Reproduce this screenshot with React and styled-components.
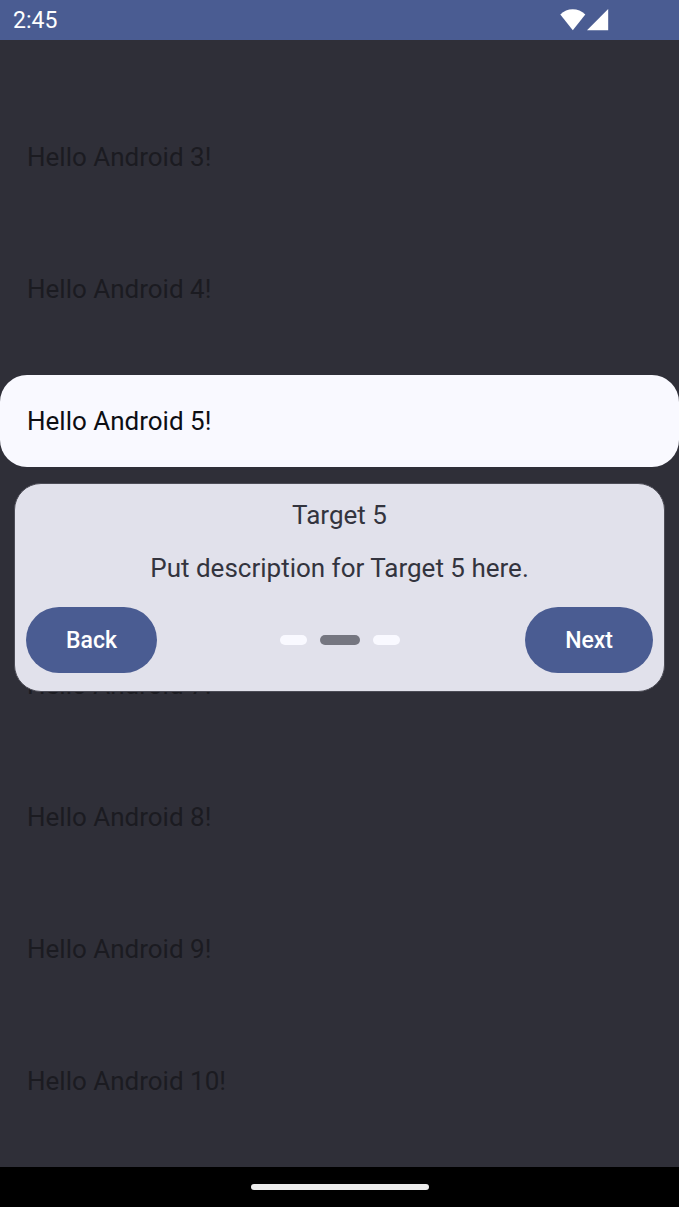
import React, { useState } from 'react';
import styled, { createGlobalStyle } from 'styled-components';

const FIRST_ROW = 3;
const ROW_COUNT = 8;
const rows = Array.from({ length: ROW_COUNT }, (_, i) => FIRST_ROW + i);
const steps = [4, 5, 6];

const App = () => {
  const [target, setTarget] = useState(5);

  const goBack = () => setTarget(Math.max(steps[0], target - 1));
  const goNext = () => setTarget(Math.min(steps[steps.length - 1], target + 1));

  return (
    <>
      <GlobalStyle />
      <Screen>
        <StatusBar>
          <Clock>2:45</Clock>
          <StatusIcons>
            <svg width="26" height="22" viewBox="0 0 26 22" aria-hidden="true">
              <path d="M0.3 5.5C7-1.4 18.4-1.4 25.3 5.5L12.8 21.2Z" fill="#fff" />
            </svg>
            <svg width="22" height="22" viewBox="0 0 22 22" aria-hidden="true">
              <path d="M21.2 0V21.2H0Z" fill="#fff" />
            </svg>
          </StatusIcons>
        </StatusBar>
        <List>
          {rows.map(row => (
            <Row
              key={row}
              $active={row === target}
              $covered={row === target + 1}
            >
              Hello Android {row}!
              {row === target && (
                <Tooltip role="dialog" aria-label={`Target ${row}`}>
                  <TooltipText>Target {row}</TooltipText>
                  <TooltipText>
                    Put description for Target {row} here.
                  </TooltipText>
                  <TooltipFooter>
                    <PillButton type="button" onClick={goBack}>
                      Back
                    </PillButton>
                    <Steps>
                      {steps.map(step => (
                        <Step key={step} $current={step === target} />
                      ))}
                    </Steps>
                    <PillButton type="button" $end onClick={goNext}>
                      Next
                    </PillButton>
                  </TooltipFooter>
                </Tooltip>
              )}
            </Row>
          ))}
        </List>
        <NavigationBar>
          <HomeHandle />
        </NavigationBar>
      </Screen>
    </>
  );
};

const GlobalStyle = createGlobalStyle`
  * {
    box-sizing: border-box;
  }

  body {
    margin: 0;
    background-color: #2f2f38;
    font-family: Roboto, 'Liberation Sans', sans-serif;
  }
`;

const Screen = styled.div`
  display: flex;
  flex-direction: column;
  min-height: 100vh;
`;

const StatusBar = styled.header`
  display: flex;
  align-items: center;
  justify-content: space-between;
  height: 40px;
  padding: 0 70px 0 13px;
  background-color: #4a5c92;
  color: #fff;
`;

const Clock = styled.time`
  padding-top: 2px;
  font-size: 23px;
  line-height: 40px;
`;

const StatusIcons = styled.div`
  display: flex;
  gap: 1px;
`;

const List = styled.ul`
  display: flex;
  flex: 1;
  flex-direction: column;
  gap: 40px;
  margin: 0;
  padding: 71px 0 40px;
  list-style: none;
`;

/* The row right under the tooltip is completely behind it. */
const Row = styled.li`
  position: relative;
  visibility: ${({ $covered }) => ($covered ? 'hidden' : 'visible')};
  padding: 26px 27px;
  border-radius: 27px;
  background-color: ${({ $active }) => ($active ? '#f9f9ff' : 'transparent')};
  color: ${({ $active }) => ($active ? '#0d0e13' : '#1b1b21')};
  font-size: 26px;
  line-height: 40px;
`;

const Tooltip = styled.section`
  position: absolute;
  top: calc(100% + 16px);
  right: 14px;
  left: 14px;
  z-index: 1;
  display: flex;
  flex-direction: column;
  gap: 13px;
  padding: 11px 11px 18px;
  border: 1px solid #4c4c56;
  border-radius: 27px;
  background-color: #e1e1eb;
  color: #33343e;
`;

const TooltipText = styled.p`
  margin: 0;
  text-align: center;
`;

const TooltipFooter = styled.div`
  display: grid;
  grid-template-columns: 1fr auto 1fr;
  align-items: center;
  padding-top: 6px;
`;

const PillButton = styled.button`
  justify-self: ${({ $end }) => ($end ? 'end' : 'start')};
  padding: 14px 40px 12px;
  border: 0;
  border-radius: 33px;
  background-color: #4a5c92;
  color: #fff;
  font-family: inherit;
  font-size: 23px;
  font-weight: 500;
  line-height: 40px;
  cursor: pointer;
`;

const Steps = styled.div`
  display: flex;
  gap: 13px;
`;

const Step = styled.span`
  width: ${({ $current }) => ($current ? '40px' : '27px')};
  height: 10px;
  border-radius: 5px;
  background-color: ${({ $current }) => ($current ? '#757680' : '#f9f9ff')};
`;

const NavigationBar = styled.footer`
  display: flex;
  align-items: center;
  justify-content: center;
  height: 40px;
  background-color: #000;
`;

const HomeHandle = styled.div`
  width: 178px;
  height: 6px;
  border-radius: 3px;
  background-color: #ececec;
`;

export default App;
